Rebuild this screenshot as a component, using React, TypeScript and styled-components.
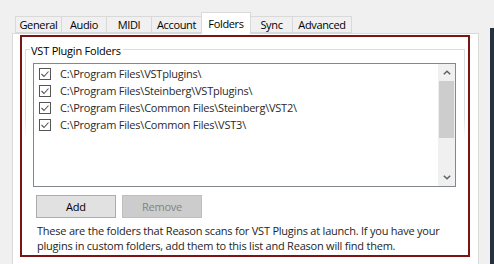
import React from "react";
import styled, { createGlobalStyle } from "styled-components";

const Global = createGlobalStyle`
  html, body { margin: 0; padding: 0; background: #f0f0f0; }
  body { font-family: "Open Sans", "Noto Sans", sans-serif; font-size: 11px; letter-spacing: -0.22px; color: #1e1e1e; }
  * { box-sizing: border-box; }
`;

const Screen = styled.div`
  display: flex;
  width: 494px;
  height: 264px;
  overflow: hidden;
  background: #f0f0f0;
`;

const Main = styled.div`
  width: 490px;
  padding: 12px 0 0 12px;
  display: flex;
  flex-direction: column;
`;

const EdgeStrip = styled.div`
  width: 4px;
  margin-top: 28px;
  background: #26313f;
`;

const TabBar = styled.div`
  display: flex;
  align-items: flex-end;
  height: 21px;
  padding-left: 3px;
  position: relative;
  z-index: 1;
`;

const Tab = styled.div<{ $w: number; $active?: boolean }>`
  flex: 0 0 auto;
  width: ${(p) => p.$w}px;
  height: ${(p) => (p.$active ? 22 : 17)}px;
  margin-bottom: ${(p) => (p.$active ? -1 : 0)}px;
  margin-left: -1px;
  display: flex;
  justify-content: center;
  align-items: ${(p) => (p.$active ? "flex-start" : "center")};
  padding-top: ${(p) => (p.$active ? 3 : 0)}px;
  background: ${(p) => (p.$active ? "#ffffff" : "#f0f0f0")};
  border: 1px solid #d9d9d9;
  border-bottom: ${(p) => (p.$active ? "none" : "1px solid #d9d9d9")};
  font-size: 11px;
  letter-spacing: -0.35px;
  color: #000;
  white-space: nowrap;
  &:first-child { margin-left: 0; }
`;

const Panel = styled.div`
  width: 467px;
  flex: 1;
  background: #fff;
  border: 1px solid #d9d9d9;
  border-bottom: none;
  padding: 1px 8px 0 7px;
`;

const FocusFrame = styled.div`
  width: 450px;
  height: 222px;
  border: 2px solid #7d1414;
  padding: 6px 3px 0 3px;
`;

const Group = styled.div`
  display: flex;
  flex-direction: column;
`;

const GroupTitle = styled.div`
  display: flex;
  height: 14px;
  align-items: center;
  &::before,
  &::after {
    content: "";
    align-self: flex-end;
    height: 7px;
    border-top: 1px solid #dcdcdc;
  }
  &::before {
    width: 4px;
    border-left: 1px solid #dcdcdc;
  }
  &::after {
    flex: 1;
    border-right: 1px solid #dcdcdc;
  }
`;

const GroupLabel = styled.span`
  padding: 0 2px 0 1px;
  font-size: 11px;
  color: #000;
  white-space: nowrap;
`;

const GroupBody = styled.div`
  border-style: solid;
  border-width: 0 1px;
  border-image: linear-gradient(to bottom, #dcdcdc 0, #dcdcdc 30%, rgba(220, 220, 220, 0) 42%) 1;
  padding: 6px 8px 0 7px;
  height: 198px;
`;

const ListBox = styled.div`
  height: 124px;
  border: 1px solid #828790;
  display: flex;
  background: #fff;
`;

const Rows = styled.div`
  flex: 1;
  padding-top: 1px;
`;

const Row = styled.div`
  height: 17px;
  display: flex;
  align-items: center;
  padding-left: 5px;
  gap: 9px;
  font-size: 11px;
  color: #2a2a2a;
  white-space: nowrap;
`;

const ScrollBar = styled.div`
  width: 17px;
  background: #f0f0f0;
  display: flex;
  flex-direction: column;
  align-items: center;
`;

const ScrollArrow = styled.div`
  width: 17px;
  height: 17px;
  display: flex;
  align-items: center;
  justify-content: center;
`;

const ScrollThumb = styled.div`
  width: 15px;
  height: 57px;
  background: #cdcdcd;
`;

const ScrollTrack = styled.div`
  flex: 1;
`;

const ButtonRow = styled.div`
  display: flex;
  gap: 6px;
  margin-top: 8px;
  padding-left: 3px;
`;

const Button = styled.div<{ $disabled?: boolean }>`
  width: 80px;
  height: 23px;
  display: flex;
  align-items: center;
  justify-content: center;
  background: ${(p) => (p.$disabled ? "#cccccc" : "#e1e1e1")};
  border: 1px solid ${(p) => (p.$disabled ? "#bfbfbf" : "#adadad")};
  color: ${(p) => (p.$disabled ? "#838383" : "#000")};
  font-size: 11px;
`;

const Description = styled.div`
  margin-top: 5px;
  padding-left: 4px;
  line-height: 15px;
  font-size: 11px;
  color: #1e1e1e;
`;

const Line = styled.span`
  display: block;
  white-space: nowrap;
`;

const CheckBox = () => (
  <svg width="12" height="12" viewBox="0 0 12 12">
    <rect x="0.5" y="0.5" width="11" height="11" fill="#fff" stroke="#555" />
    <polyline points="2.5,6 5,8.5 9.5,3.5" fill="none" stroke="#555" strokeWidth="1.1" />
  </svg>
);

const Chevron = ({ up }: { up?: boolean }) => (
  <svg width="8" height="5" viewBox="0 0 8 5">
    <polyline
      points={up ? "0.8,4.3 4,1.2 7.2,4.3" : "0.8,0.7 4,3.8 7.2,0.7"}
      fill="none"
      stroke="#606060"
      strokeWidth="1.5"
    />
  </svg>
);

const tabs = [
  { label: "General", w: 47 },
  { label: "Audio", w: 46 },
  { label: "MIDI", w: 46 },
  { label: "Account", w: 51 },
  { label: "Folders", w: 50, active: true },
  { label: "Sync", w: 43 },
  { label: "Advanced", w: 60 },
];

const folders = [
  "C:\\Program Files\\VSTplugins\\",
  "C:\\Program Files\\Steinberg\\VSTplugins\\",
  "C:\\Program Files\\Common Files\\Steinberg\\VST2\\",
  "C:\\Program Files\\Common Files\\VST3\\",
];

export default function App() {
  return (
    <>
      <Global />
      <Screen>
        <Main>
          <TabBar>
            {tabs.map((t) => (
              <Tab key={t.label} $w={t.w} $active={t.active}>
                {t.label}
              </Tab>
            ))}
          </TabBar>
          <Panel>
            <FocusFrame>
              <Group>
                <GroupTitle>
                  <GroupLabel>VST Plugin Folders</GroupLabel>
                </GroupTitle>
                <GroupBody>
                  <ListBox>
                    <Rows>
                      {folders.map((f) => (
                        <Row key={f}>
                          <CheckBox />
                          {f}
                        </Row>
                      ))}
                    </Rows>
                    <ScrollBar>
                      <ScrollArrow>
                        <Chevron up />
                      </ScrollArrow>
                      <ScrollThumb />
                      <ScrollTrack />
                      <ScrollArrow>
                        <Chevron />
                      </ScrollArrow>
                    </ScrollBar>
                  </ListBox>
                  <ButtonRow>
                    <Button>Add</Button>
                    <Button $disabled>Remove</Button>
                  </ButtonRow>
                  <Description>
                    <Line>These are the folders that Reason scans for VST Plugins at launch. If you have your</Line>
                    <Line>plugins in custom folders, add them to this list and Reason will find them.</Line>
                  </Description>
                </GroupBody>
              </Group>
            </FocusFrame>
          </Panel>
        </Main>
        <EdgeStrip />
      </Screen>
    </>
  );
}
